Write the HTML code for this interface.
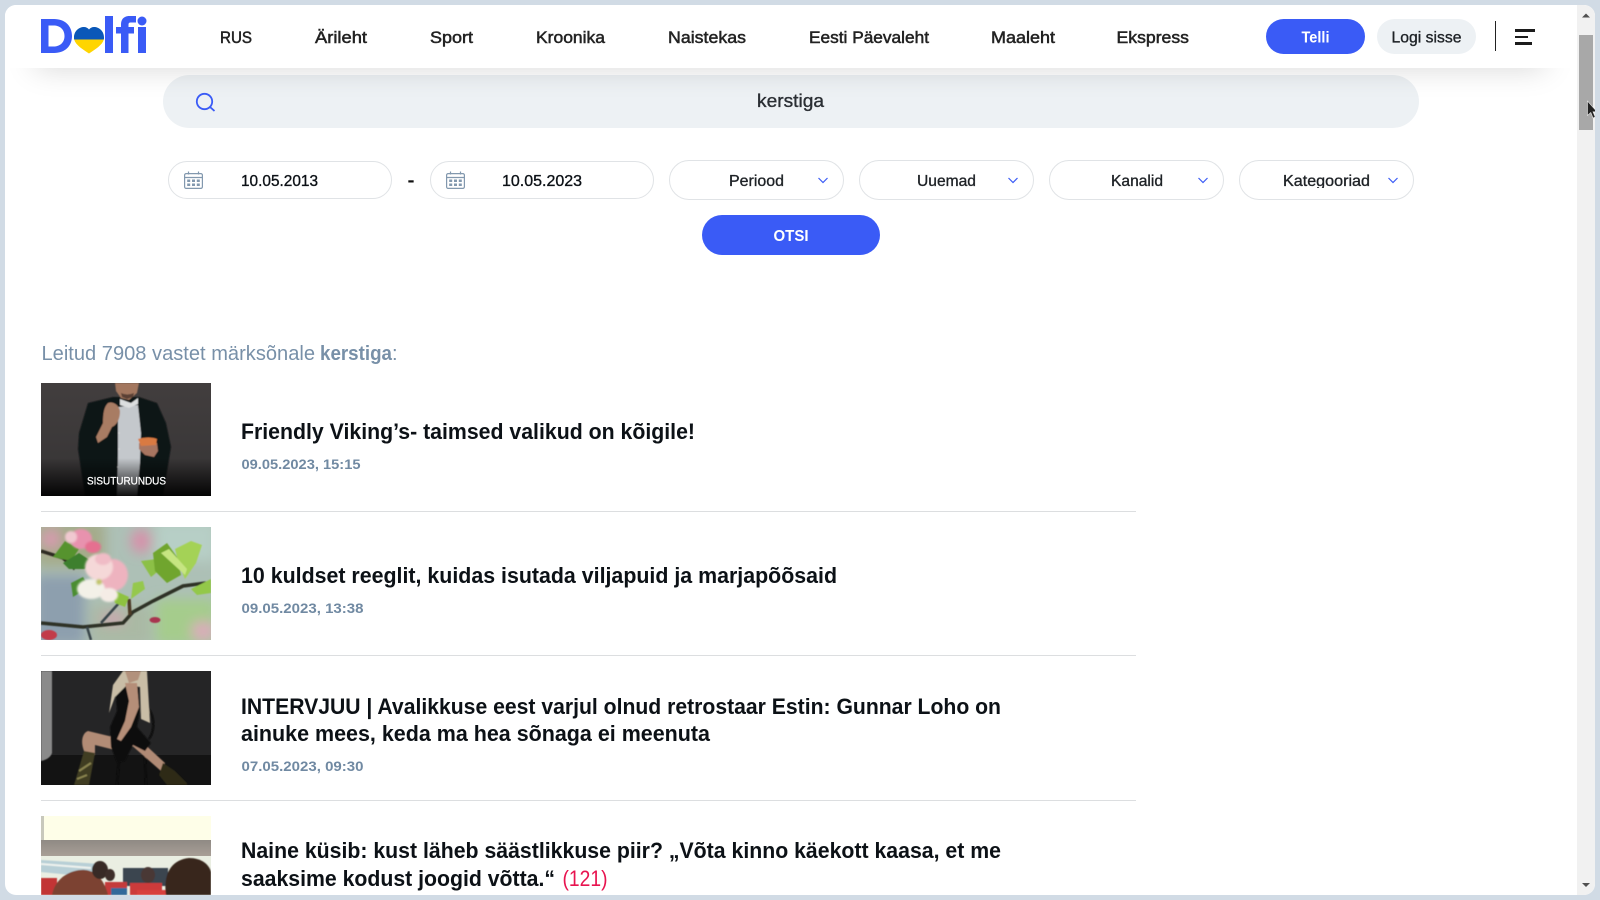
<!DOCTYPE html>
<html lang="et">
<head>
<meta charset="utf-8">
<title>Delfi otsing</title>
<style>
html,body{margin:0;padding:0;width:1600px;height:900px;overflow:hidden;background:#d1dbe5;font-family:"Liberation Sans",sans-serif}
.page{position:absolute;left:5px;top:5px;width:1590px;height:890px;background:#fff;border-radius:11px;overflow:hidden}
.in{position:absolute;left:-5px;top:-5px;width:1600px;height:900px}
.a{position:absolute;box-sizing:border-box}
.shadow{left:35px;width:1510px;top:40px;height:28px;box-shadow:0 0 30px rgba(0,0,0,.17);z-index:3}
.head{left:0;top:0;width:1600px;height:68px;background:#fff;z-index:4}
.pill{border:1px solid #e0e3e6;border-radius:20px;background:#fff}
.blue{background:#3a5bf6}
.line{left:41px;width:1095px;height:1px;background:#dcdee0}
svg.full{position:absolute;left:0;top:0;width:1600px;height:900px;z-index:6}
svg text{font-family:"Liberation Sans",sans-serif}
.nav{font-size:16.5px;fill:#222;stroke:#222;stroke-width:.5}
.m16{font-size:16px;fill:#1e2226;stroke:#1e2226;stroke-width:.35}
.t{font-size:22px;font-weight:700;fill:#0c1116}
.d{font-size:14px;font-weight:700;fill:#7089a2}
.sb{left:1577px;top:0;width:23px;height:900px;background:#f1f1f1;z-index:5}
</style>
</head>
<body>
<div class="page"><div class="in">
  <div class="a shadow"></div>
  <div class="a head"></div>
  <div class="a" style="left:163px;top:75px;width:1256px;height:53px;background:#edf1f4;border-radius:27px"></div>
  <div class="a pill" style="left:168px;top:161px;width:224px;height:38px"></div>
  <div class="a pill" style="left:430px;top:161px;width:224px;height:38px"></div>
  <div class="a pill" style="left:669px;top:160px;width:175px;height:40px"></div>
  <div class="a pill" style="left:859px;top:160px;width:175px;height:40px"></div>
  <div class="a pill" style="left:1049px;top:160px;width:175px;height:40px"></div>
  <div class="a pill" style="left:1239px;top:160px;width:175px;height:40px"></div>
  <div class="a blue" style="left:702px;top:215px;width:178px;height:40px;border-radius:20px"></div>
  <div class="a line" style="top:511px"></div>
  <div class="a line" style="top:655px"></div>
  <div class="a line" style="top:800px"></div>

  <!-- image 1 -->
  <svg class="a" style="left:41px;top:383px" width="170" height="113" viewBox="0 0 170 113">
    <defs>
      <linearGradient id="g1" x1="0" y1="0" x2="0" y2="1"><stop offset="0" stop-color="#423e3e"/><stop offset="1" stop-color="#363435"/></linearGradient>
      <linearGradient id="g1b" x1="0" y1="0" x2="0" y2="1"><stop offset="0" stop-color="#000" stop-opacity="0"/><stop offset="1" stop-color="#000" stop-opacity=".92"/></linearGradient>
      <linearGradient id="g4" x1="0" y1="0" x2="0" y2="1"><stop offset="0" stop-color="#8f8a84"/><stop offset="1" stop-color="#a89e96"/></linearGradient>
      <filter id="b1" x="-5%" y="-5%" width="110%" height="110%"><feGaussianBlur stdDeviation=".6"/></filter>
      <filter id="b2" x="-10%" y="-10%" width="120%" height="120%"><feGaussianBlur stdDeviation="1.1"/></filter>
      <filter id="b3" x="-20%" y="-20%" width="140%" height="140%"><feGaussianBlur stdDeviation="6"/></filter>
    </defs>
    <rect width="170" height="113" fill="url(#g1)"/>
    <g filter="url(#b1)">
      <path d="M72 14L47 20L38 50L37 66L44 113L122 113L130 64L125 40L116 20L98 14Z" fill="#0e1213"/>
      <path d="M77 24L97 22L100 50L99 80L96 113L76 113L77 70Z" fill="#c4c8cc"/>
      <path d="M74 0H98L96 10L88 17L80 15L75 8Z" fill="#a3775e"/>
      <path d="M80 10Q86 13 93 10L92 14L86 16L81 14Z" fill="#5a4034"/>
      <path d="M79 16L90 20L97 15L97 21L88 25L79 22Z" fill="#dcdedf"/>
      <path d="M67 20C72 18 78 22 79 28C79 36 76 42 71 44L66 54L57 60L55 54L62 40C62 30 63 24 67 20Z" fill="#a87b64"/>
      <path d="M98 60L116 60L117 68L113 74L104 72L98 66Z" fill="#a87460"/>
      <path d="M97 56C103 54 112 54 116 56L115 62L100 63Z" fill="#d97a42"/>
      <circle cx="78" cy="50" r=".8" fill="#ddd"/><circle cx="78" cy="66" r=".8" fill="#ddd"/><circle cx="77" cy="84" r=".8" fill="#ddd"/>
    </g>
    <rect y="75" width="170" height="38" fill="url(#g1b)"/>
  </svg>

  <!-- image 2 -->
  <svg class="a" style="left:41px;top:527px" width="170" height="113" viewBox="0 0 170 113">
    <rect width="170" height="113" fill="#adc0b6"/>
    <g filter="url(#b3)">
      <rect x="-6" y="-6" width="70" height="46" fill="#a4ab8a"/>
      <ellipse cx="10" cy="12" rx="10" ry="10" fill="#d89ab0"/>
      <ellipse cx="100" cy="14" rx="10" ry="12" fill="#d890aa"/>
      <rect x="115" y="-6" width="60" height="40" fill="#b7cfc6"/>
      <rect x="-6" y="48" width="50" height="70" fill="#8d9fae"/>
      <rect x="50" y="78" width="60" height="40" fill="#aab9a4"/>
      <rect x="115" y="72" width="60" height="46" fill="#a5cc8c"/>
      <ellipse cx="162" cy="104" rx="12" ry="10" fill="#dcaabc"/>
      <ellipse cx="72" cy="92" rx="12" ry="6" fill="#cfa3b2"/>
    </g>
    <g filter="url(#b1)">
      <path d="M0 24L22 31L34 42" stroke="#2e2a22" stroke-width="3.500" fill="none"/>
      <path d="M0 96L42 100L82 96L92 85L112 74L142 59L165 56" stroke="#2f3026" stroke-width="3.500" fill="none"/>
      <path d="M46 100L50 113M60 96L78 76" stroke="#37444a" stroke-width="2.500" fill="none"/>
      <path d="M89 88L88 72" stroke="#4e3a26" stroke-width="3.500" fill="none"/>
      <path d="M12 30L24 14L38 22L30 34Z" fill="#57932f"/>
      <path d="M22 36L38 26L50 34L44 42L28 42Z" fill="#3e7f2e"/>
      <path d="M30 56L42 50L48 60L32 70Z" fill="#4b8d32"/>
      <path d="M100 34L116 32L120 42L110 50Z" fill="#8cc046"/>
      <path d="M112 26L126 16L136 30L140 48L126 56L114 44Z" fill="#6fa52f"/>
      <path d="M134 22L150 14L161 18L155 36L144 52L138 38Z" fill="#a4d257"/>
      <path d="M120 26L128 22L146 42L144 48Z" fill="#c6e581"/>
      <path d="M150 62L170 52L170 66L156 68Z" fill="#93c84a"/>
      <path d="M70 62L88 70L84 80L74 76Z" fill="#8ec23f"/>
      <path d="M92 56L102 54L104 62L90 72Z" fill="#95c84e"/>
      <ellipse cx="114" cy="93" rx="5.500" ry="3" fill="#a83650"/>
      <ellipse cx="8" cy="108" rx="8" ry="5" fill="#c23a4a"/>
    </g>
    <g filter="url(#b2)">
      <ellipse cx="40" cy="12" rx="11" ry="10" fill="#e892ae"/>
      <ellipse cx="52" cy="20" rx="8" ry="6" fill="#e56f90"/>
      <ellipse cx="30" cy="10" rx="6" ry="6" fill="#f0c8d0"/>
      <ellipse cx="72" cy="48" rx="15" ry="16" fill="#eeb3bf"/>
      <ellipse cx="58" cy="40" rx="14" ry="13" fill="#f5d8d8"/>
      <ellipse cx="50" cy="62" rx="14" ry="10" fill="#f3f1e8"/>
      <ellipse cx="68" cy="68" rx="9" ry="7" fill="#f5ece6"/>
      <ellipse cx="62" cy="32" rx="8" ry="6" fill="#f0bcc6"/>
      <circle cx="58" cy="55" r="3" fill="#c2c66a"/>
    </g>
  </svg>

  <!-- image 3 -->
  <svg class="a" style="left:41px;top:671px" width="170" height="114" viewBox="0 0 170 114">
    <rect width="170" height="114" fill="#252526"/>
    <rect y="84" width="170" height="30" fill="#131313"/>
    <g filter="url(#b1)">
      <path d="M0 0H11V82Q9 88 0 90Z" fill="#8a8a8a"/>
      <path d="M78 88L76 114M104 86L105 114M106 36C114 44 114 60 108 68" stroke="#0a0a0a" stroke-width="2.200" fill="none"/>
      <path d="M72 66L47 60C41 62 39 72 44 82L54 84L54 74L78 80Z" fill="#b28c76"/>
      <path d="M88 72L98 68L124 92L120 100Z" fill="#b08a74"/>
      <path d="M33 114L43 80L54 82L48 114Z" fill="#3f3d24"/>
      <path d="M38 100L50 92M36 108L46 104" stroke="#8a8450" stroke-width="2" fill="none"/>
      <path d="M122 92L134 100L146 112V114H126L118 104Z" fill="#2e2c18"/>
      <path d="M74 14L97 14L99 40L96 56L110 72L104 80L92 74L84 90L76 92L70 76L69 56L76 40Z" fill="#0d0d0d"/>
      <path d="M68 42L72 14L82 0H106L109 52L100 48L99 16L86 14L74 26Z" fill="#c9bda6"/>
      <path d="M84 0H100L97 9L88 12Z" fill="#b2917c"/>
      <path d="M84 12L96 12L98 36L90 56L80 70L76 68L84 50L88 30Z" fill="#b58e78"/>
    </g>
  </svg>

  <!-- image 4 -->
  <svg class="a" style="left:41px;top:816px" width="170" height="79" viewBox="0 0 170 79">
    <rect width="170" height="79" fill="#eaeee2"/>
    <rect width="170" height="24" fill="#fefee8"/>
    <rect x="0" width="3" height="24" fill="#c8c8bc"/>
    <rect y="24" width="170" height="16" fill="url(#g4)"/>
    <g filter="url(#b1)">
      <path d="M0 44L60 48V62L0 56Z" fill="#b8cfd6"/>
      <path d="M0 48L50 52" stroke="#eef2ee" stroke-width="2"/>
      <rect x="82" y="52" width="45" height="18" fill="#3a4450"/>
      <rect x="0" y="62" width="16" height="17" fill="#c23636"/>
      <rect x="64" y="66" width="22" height="13" fill="#c43a3a"/>
      <rect x="70" y="72" width="16" height="7" fill="#33699a"/>
      <rect x="89" y="67" width="32" height="12" fill="#cc3b3a"/>
      <rect x="96" y="74" width="32" height="5" fill="#d8403e"/>
      <path d="M11 79C14 62 30 53 44 54C56 55 64 66 67 79Z" fill="#7b4332"/>
      <ellipse cx="59" cy="54" rx="8" ry="9" fill="#382a25"/>
      <ellipse cx="69" cy="59" rx="5" ry="6" fill="#3e2e2a"/>
      <ellipse cx="107" cy="59" rx="7" ry="8" fill="#4a3834"/>
      <path d="M125 79C122 58 130 44 148 42C160 42 168 48 170 56V79Z" fill="#39281f"/>
    </g>
  </svg>

  <svg class="a" style="left:0;top:0;z-index:7" width="200" height="60" viewBox="0 0 200 60">
    <path fill-rule="evenodd" d="M41 19H54C65 19 72 26 72 36C72 46 65 53 54 53H41ZM48.500 25.500V46.500H53.500C60 46.500 64.500 42.500 64.500 36C64.500 29.500 60 25.500 53.500 25.500Z" fill="#3a5bf6"/>
    <path d="M74 37.500C74 31 79 27 84 27C86 27 88 28 89 29.500C90 28 92 27 94 27C99 27 104 31 104 37.500C104 38.500 104 39 103.800 39.500H74.200C74 39 74 38.500 74 37.500Z" fill="#0a57b8"/>
    <path d="M74.200 39.500H103.800C102.500 45 95 49.500 89 53.500C83 49.500 75.500 45 74.200 39.500Z" fill="#ffd500"/>
    <rect x="105" y="16" width="8" height="37" fill="#3a5bf6"/>
    <path d="M121 53V33.500H116V27H121V24.500C121 19 124 16 129.500 16H136V22.500H131C129 22.500 128.500 23.200 128.500 24.800V27H134V33.500H128.500V53Z" fill="#3a5bf6"/>
    <rect x="138" y="27" width="8" height="26" fill="#3a5bf6"/>
    <circle cx="142" cy="21" r="4.500" fill="#3a5bf6"/>
  </svg>

  <div class="a blue" style="left:1266px;top:19px;width:99px;height:35px;border-radius:18px;z-index:5"></div>
  <div class="a" style="left:1377px;top:19px;width:99px;height:35px;border-radius:18px;background:#edf1f4;z-index:5"></div>
  <div class="a" style="left:1495px;top:21px;width:1px;height:30px;background:#222;z-index:5"></div>
  <div class="a" style="left:1515px;top:29px;width:20px;height:2.500px;background:#1c1c1c;z-index:5"></div>
  <div class="a" style="left:1515px;top:35.500px;width:13px;height:2.500px;background:#1c1c1c;z-index:5"></div>
  <div class="a" style="left:1515px;top:42px;width:17px;height:2.500px;background:#1c1c1c;z-index:5"></div>

  <svg class="full" viewBox="0 0 1600 900">
    <defs>
      <clipPath id="kc"><rect x="1270" y="165" width="110" height="23"/></clipPath>
      <g id="cal" fill="none" stroke="#8298ae" stroke-width="1.200">
        <rect x=".6" y="2.600" width="17.800" height="14.800" rx="1.500"/>
        <path d="M.6 6.500H18.400M4.500 .5V3.500M14.500 .5V3.500"/>
        <g stroke="none" fill="#8298ae">
          <rect x="3.200" y="8.500" width="3" height="2.500"/><rect x="8" y="8.500" width="3" height="2.500"/><rect x="12.800" y="8.500" width="3" height="2.500"/>
          <rect x="3.200" y="12.500" width="3" height="2.500"/><rect x="8" y="12.500" width="3" height="2.500"/><rect x="12.800" y="12.500" width="3" height="2.500"/>
        </g>
      </g>
    </defs>
    <text class="nav" x="220" y="43" textLength="32" lengthAdjust="spacingAndGlyphs">RUS</text>
    <text class="nav" x="315" y="43" textLength="52" lengthAdjust="spacingAndGlyphs">Ärileht</text>
    <text class="nav" x="430" y="43" textLength="43" lengthAdjust="spacingAndGlyphs">Sport</text>
    <text class="nav" x="536" y="43" textLength="69" lengthAdjust="spacingAndGlyphs">Kroonika</text>
    <text class="nav" x="668" y="43" textLength="78" lengthAdjust="spacingAndGlyphs">Naistekas</text>
    <text class="nav" x="809" y="43" textLength="120" lengthAdjust="spacingAndGlyphs">Eesti Päevaleht</text>
    <text class="nav" x="991" y="43" textLength="64" lengthAdjust="spacingAndGlyphs">Maaleht</text>
    <text class="nav" x="1116.500" y="43" textLength="72.500" lengthAdjust="spacingAndGlyphs">Ekspress</text>
    <text x="1301.500" y="42.500" font-size="15.500" font-weight="700" fill="#fff" textLength="28" lengthAdjust="spacingAndGlyphs">Telli</text>
    <text class="m16" x="1391.500" y="42.500" textLength="70" lengthAdjust="spacingAndGlyphs">Logi sisse</text>

    <circle cx="204.500" cy="101.500" r="7.700" fill="none" stroke="#3a5bf6" stroke-width="1.800"/>
    <path d="M210 107L214.500 111" stroke="#3a5bf6" stroke-width="1.800" fill="none"/>
    <text x="757" y="107" font-size="18" fill="#2a2e33" stroke="#2a2e33" stroke-width=".35" textLength="67" lengthAdjust="spacingAndGlyphs">kerstiga</text>

    <use href="#cal" x="184" y="171"/>
    <use href="#cal" x="446" y="171"/>
    <text class="m16" x="241" y="186" textLength="77" lengthAdjust="spacingAndGlyphs" style="fill:#0c1116;stroke:#0c1116">10.05.2013</text>
    <text x="407.500" y="186" font-size="18" font-weight="700" fill="#111" textLength="7" lengthAdjust="spacingAndGlyphs">-</text>
    <text class="m16" x="502" y="186" textLength="80" lengthAdjust="spacingAndGlyphs" style="fill:#0c1116;stroke:#0c1116">10.05.2023</text>
    <text class="m16" x="729" y="186" textLength="55" lengthAdjust="spacingAndGlyphs">Periood</text>
    <text class="m16" x="917" y="186" textLength="59" lengthAdjust="spacingAndGlyphs">Uuemad</text>
    <text class="m16" x="1111" y="186" textLength="52" lengthAdjust="spacingAndGlyphs">Kanalid</text>
    <text class="m16" x="1283" y="186" textLength="87" lengthAdjust="spacingAndGlyphs" clip-path="url(#kc)">Kategooriad</text>
    <g fill="none" stroke="#3a5bf6" stroke-width="1.200">
      <path d="M818.500 178L823 182.500L827.500 178"/>
      <path d="M1008.500 178L1013 182.500L1017.500 178"/>
      <path d="M1198.500 178L1203 182.500L1207.500 178"/>
      <path d="M1388.500 178L1393 182.500L1397.500 178"/>
    </g>
    <text x="773.500" y="241" font-size="15.500" font-weight="700" fill="#fff" textLength="35" lengthAdjust="spacingAndGlyphs">OTSI</text>

    <text x="41.500" y="360" font-size="20" fill="#7890a8" textLength="273.500" lengthAdjust="spacingAndGlyphs">Leitud 7908 vastet märksõnale</text>
    <text x="320" y="360" font-size="20" font-weight="700" fill="#7890a8" textLength="72" lengthAdjust="spacingAndGlyphs">kerstiga</text>
    <text x="392" y="360" font-size="20" fill="#7890a8">:</text>

    <text x="87" y="484.500" font-size="11" fill="#fff" stroke="#fff" stroke-width=".25" textLength="79" lengthAdjust="spacingAndGlyphs">SISUTURUNDUS</text>

    <text class="t" x="241" y="439" textLength="454" lengthAdjust="spacingAndGlyphs">Friendly Viking’s- taimsed valikud on kõigile!</text>
    <text class="d" x="241.500" y="469" textLength="119" lengthAdjust="spacingAndGlyphs">09.05.2023, 15:15</text>
    <text class="t" x="241" y="583" textLength="596" lengthAdjust="spacingAndGlyphs">10 kuldset reeglit, kuidas isutada viljapuid ja marjapõõsaid</text>
    <text class="d" x="241.500" y="613" textLength="122" lengthAdjust="spacingAndGlyphs">09.05.2023, 13:38</text>
    <text class="t" x="241" y="714" textLength="760" lengthAdjust="spacingAndGlyphs">INTERVJUU | Avalikkuse eest varjul olnud retrostaar Estin: Gunnar Loho on</text>
    <text class="t" x="241" y="741" textLength="469" lengthAdjust="spacingAndGlyphs">ainuke mees, keda ma hea sõnaga ei meenuta</text>
    <text class="d" x="241.500" y="771" textLength="122" lengthAdjust="spacingAndGlyphs">07.05.2023, 09:30</text>
    <text class="t" x="241" y="858" textLength="760" lengthAdjust="spacingAndGlyphs">Naine küsib: kust läheb säästlikkuse piir? „Võta kinno käekott kaasa, et me</text>
    <text class="t" x="241" y="886" textLength="314" lengthAdjust="spacingAndGlyphs">saaksime kodust joogid võtta.“</text>
    <text x="562.500" y="886" font-size="22" fill="#e8134f" textLength="45" lengthAdjust="spacingAndGlyphs">(121)</text>
  </svg>

  <div class="a sb"></div>
  <div class="a" style="left:1579px;top:35px;width:14px;height:95px;background:#a8a8a8;z-index:5"></div>
  <svg class="a" style="left:0;top:0;z-index:8" width="1600" height="900" viewBox="0 0 1600 900">
    <path d="M1582 17.500L1586 13.500L1590 17.500Z" fill="#505050"/>
    <path d="M1582 883L1586 887L1590 883Z" fill="#505050"/>
    <path d="M1587.500 101V115.500L1590.800 112.500L1593 118L1595.200 117L1593 111.800H1597Z" fill="#222" stroke="#e8e8e8" stroke-width=".6"/>
  </svg>
</div></div>
</body>
</html>
